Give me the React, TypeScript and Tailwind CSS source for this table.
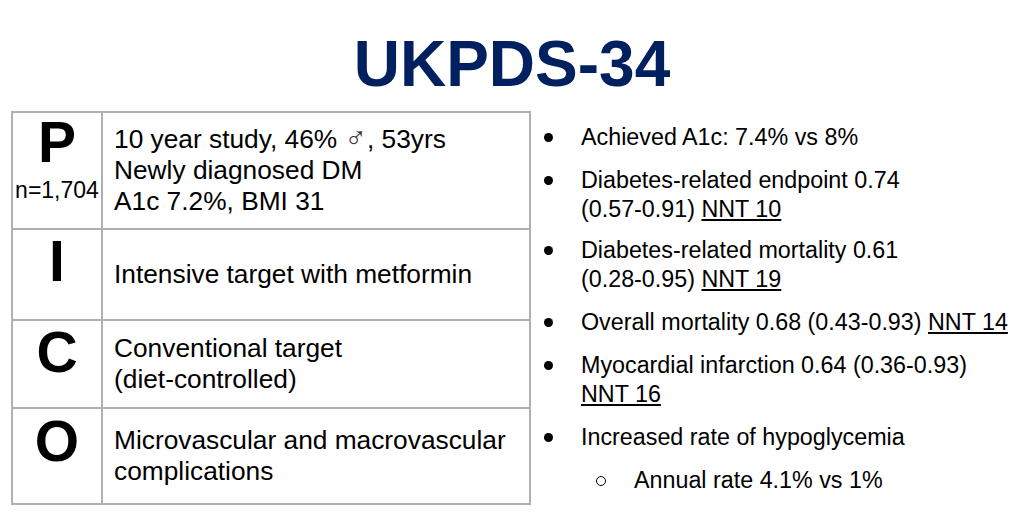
import React from "react";

const font = { fontFamily: '"Liberation Sans", "DejaVu Sans", Arial, sans-serif' };

function Bullet({
  children,
  sub = false,
  extra = "",
}: {
  children: React.ReactNode;
  sub?: boolean;
  extra?: string;
}) {
  return (
    <li className={`flex items-start ${sub ? "pl-[53px]" : ""} ${extra}`}>
      <span className="flex h-[29px] w-[50px] shrink-0 items-center">
        {sub ? (
          <span className="ml-[12px] block h-[10px] w-[10px] rounded-full border-[1.5px] border-black" />
        ) : (
          <span className="ml-[13px] block h-[9px] w-[9px] rounded-full bg-black" />
        )}
      </span>
      <span className="block">{children}</span>
    </li>
  );
}

function Row({
  letter,
  extra,
  h,
  first = false,
  pt,
  children,
}: {
  letter: string;
  extra?: string;
  h: string;
  first?: boolean;
  pt: string;
  children: React.ReactNode;
}) {
  return (
    <div className={`flex ${h} ${first ? "" : "border-t-2 border-[#b0b0b0]"}`}>
      <div className={`flex w-[90px] shrink-0 flex-col items-center border-r-2 border-[#b0b0b0] ${pt}`}>
        <div className="text-[57px] font-bold leading-[56px]">{letter}</div>
        {extra && <div className="mt-[6px] whitespace-nowrap text-[23px] leading-[28px]">{extra}</div>}
      </div>
      <div className="flex flex-1 items-center pl-[11px] text-[26.3px] leading-[31px]">
        <div>{children}</div>
      </div>
    </div>
  );
}

export default function App() {
  return (
    <div className="h-[519px] w-[1024px] overflow-hidden bg-white text-black" style={font}>
      <h1 className="pt-[32px] text-center text-[64px] font-bold leading-[64px] text-[#002060]">UKPDS-34</h1>
      <div className="mt-[15px] flex items-start">
        <div className="ml-[11px] w-[520px] shrink-0 border-2 border-[#b0b0b0]">
          <Row letter="P" extra="n=1,704" h="h-[115px]" first pt="pt-[1px]">
            <span className="whitespace-nowrap">
              10 year study, 46%{" "}
              <span
                className="font-extralight text-[30px] leading-[0] text-[#333]"
                style={{ fontFamily: '"DejaVu Sans", sans-serif' }}
              >
                ♂
              </span>
              , 53yrs
            </span>
            <br />
            Newly diagnosed DM
            <br />
            A1c 7.2%, BMI 31
          </Row>
          <Row letter="I" h="h-[91px]" pt="pt-[3px]">
            Intensive target with metformin
          </Row>
          <Row letter="C" h="h-[88px]" pt="pt-[3px]">
            Conventional target
            <br />
            (diet-controlled)
          </Row>
          <Row letter="O" h="h-[96px]" pt="pt-[4px]">
            Microvascular and macrovascular
            <br />
            complications
          </Row>
        </div>
        <ul className="flex flex-col gap-[14px] pt-[12px] text-[23.3px] leading-[29px]">
          <Bullet>Achieved A1c: 7.4% vs 8%</Bullet>
          <Bullet>
            Diabetes-related endpoint 0.74
            <br />
            (0.57-0.91) <span className="underline">NNT 10</span>
          </Bullet>
          <Bullet extra="-mt-[2px]">
            Diabetes-related mortality 0.61
            <br />
            (0.28-0.95) <span className="underline">NNT 19</span>
          </Bullet>
          <Bullet>
            <span className="whitespace-nowrap">
              Overall mortality 0.68 (0.43-0.93) <span className="underline">NNT 14</span>
            </span>
          </Bullet>
          <Bullet>
            Myocardial infarction 0.64 (0.36-0.93)
            <br />
            <span className="underline">NNT 16</span>
          </Bullet>
          <Bullet>Increased rate of hypoglycemia</Bullet>
          <Bullet sub>Annual rate 4.1% vs 1%</Bullet>
        </ul>
      </div>
    </div>
  );
}
